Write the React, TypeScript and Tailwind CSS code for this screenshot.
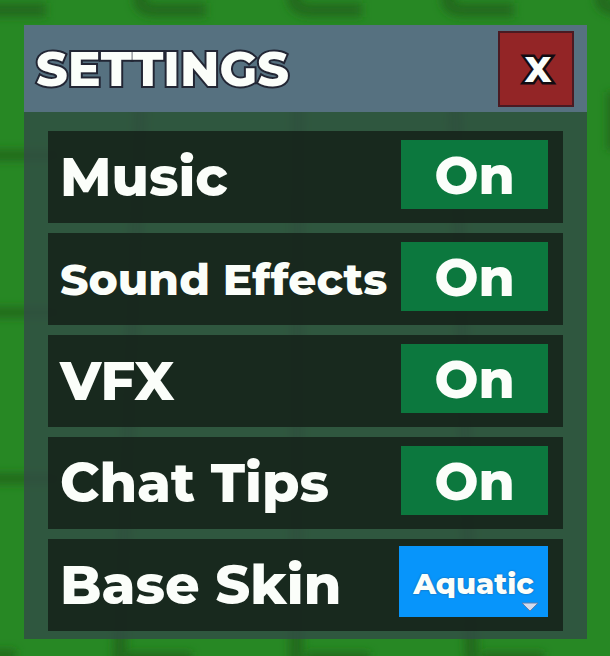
import React, { useState } from "react";

const toggles = ["Music", "Sound Effects", "VFX", "Chat Tips"];
const skins = ["Aquatic", "Classic", "Lava"];

// Blurred grass tiles behind the panel
const Backdrop = () => (
  <svg
    aria-hidden="true"
    viewBox="0 0 610 656"
    preserveAspectRatio="none"
    className="absolute inset-0 -z-10 size-full"
  >
    <defs>
      <filter id="soft" x="-10%" y="-10%" width="120%" height="120%">
        <feGaussianBlur stdDeviation="4" />
      </filter>
    </defs>
    <g filter="url(#soft)" fill="none" stroke="#236a1b" strokeWidth="14">
      <path d="M-20 10H46M140 -14V0Q140 10 156 10H206M294 -14V0Q296 10 312 10H362M448 -14V0Q448 10 464 10H514M602 -14V0Q602 10 630 10" />
      <path d="M-20 155H60M-20 312H60M-20 478H60M-20 654H16" strokeWidth="11" />
      <path d="M141 100L119 670M298 100L296 670M455 100L472 670" />
      <path d="M126 658H192M306 658H370M482 658H544" />
      <path d="M614 92V150" />
    </g>
  </svg>
);

const outline = "[paint-order:stroke_fill] [stroke-linejoin:round]";

const Row = ({ children }: { children: React.ReactNode }) => (
  <div className="flex h-[92px] items-center justify-between bg-[#131e17]/80 pr-[15px] pl-3 text-[54px]">
    {children}
  </div>
);

const Toggle = ({ name }: { name: string }) => {
  const [on, setOn] = useState(true);

  return (
    <Row>
      <span
        id={name}
        className={name.length > 10 ? "text-[44px] whitespace-nowrap" : "whitespace-nowrap"}
      >
        {name}
      </span>
      <button
        type="button"
        aria-labelledby={name}
        aria-pressed={on}
        onClick={() => setOn(!on)}
        className="mb-[6px] h-[69px] w-[147px] shrink-0 bg-[#0c783e] pt-1 text-[52px]"
      >
        {on ? "On" : "Off"}
      </button>
    </Row>
  );
};

export default function App() {
  return (
    <main className="relative isolate min-h-screen overflow-hidden bg-[#278824] pt-[25px] pr-[23px] pb-[18px] pl-6 font-['Montserrat','Inter',sans-serif] leading-none font-extrabold text-[#fbfefa]">
      <Backdrop />
      <section className="bg-[#324b46]/80">
        <header className="flex h-[87px] items-center justify-between bg-[#567180] pr-[13px] pl-3">
          <h1 className={`text-[49px] [-webkit-text-stroke:4px_#222634] ${outline}`}>
            SETTINGS
          </h1>
          <button
            type="button"
            aria-label="Close"
            className="size-[76px] border-2 border-[#4a1a22] bg-[#932526] pl-1 text-[36px]"
          >
            <span className={`[-webkit-text-stroke:5px_#120c12] ${outline}`}>X</span>
          </button>
        </header>

        <div className="flex flex-col gap-[10px] px-6 pt-[19px] pb-2">
          {toggles.map((name) => (
            <Toggle key={name} name={name} />
          ))}
          <Row>
            <label htmlFor="skin">Base Skin</label>
            <div className="relative mb-2">
              <select
                id="skin"
                className="block h-[71px] w-[149px] appearance-none bg-[#0795fb] pt-1 text-center text-[29px] text-shadow-[0_0_2px_#24598a]"
              >
                {skins.map((skin) => (
                  <option key={skin}>{skin}</option>
                ))}
              </select>
              <svg
                aria-hidden="true"
                viewBox="0 0 20 12"
                className="pointer-events-none absolute right-2 bottom-1 h-3 w-5"
              >
                <path d="M2 2H18L10 10Z" fill="#d5dced" stroke="#5f7fae" />
              </svg>
            </div>
          </Row>
        </div>
      </section>
    </main>
  );
}
